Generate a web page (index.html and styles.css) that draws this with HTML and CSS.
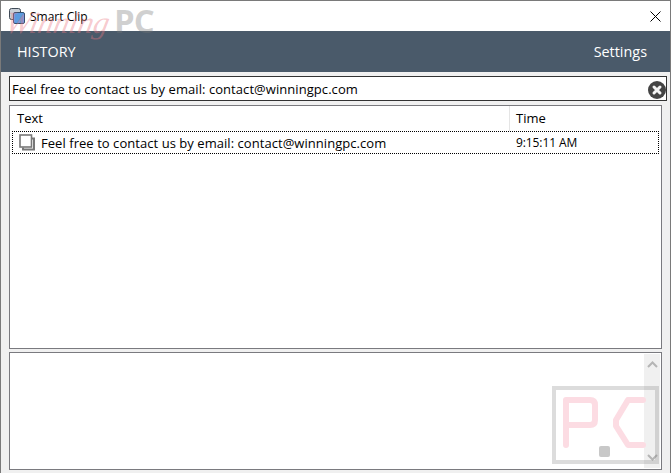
FILE: index.html
```html
<!DOCTYPE html>
<html lang="en">
<head>
    <meta charset="UTF-8">
    <title>Smart Clip</title>
    <link rel="stylesheet" href="styles.css">
</head>
<body>
    <div class="window">
        <!-- Title bar -->
        <div class="titlebar">
            <svg class="app-icon" width="16" height="16" viewBox="0 0 16 16">
                <rect x="0.5" y="0.5" width="11" height="11" rx="2" fill="#c9d0d8" stroke="#3f4a56"/>
                <rect x="4.5" y="4.5" width="11" height="11" rx="1.5" fill="#5b9be0" stroke="#33506f"/>
            </svg>
            <span class="app-title">Smart Clip</span>
            <svg class="close-icon" width="11" height="11" viewBox="0 0 11 11">
                <path d="M0.5 0.5L10.5 10.5M10.5 0.5L0.5 10.5" stroke="#000" stroke-width="1"/>
            </svg>
        </div>

        <!-- Navigation -->
        <div class="navbar">
            <span>HISTORY</span>
            <span>Settings</span>
        </div>

        <!-- Search -->
        <div class="search-box">
            <span>Feel free to contact us by email: contact@winningpc.com</span>
            <svg class="clear-icon" width="18" height="18" viewBox="0 0 18 18">
                <circle cx="9" cy="9" r="9" fill="#444"/>
                <path d="M6 6L12 12M12 6L6 12" stroke="#f4f4f4" stroke-width="3" stroke-linecap="round"/>
            </svg>
        </div>

        <!-- History list -->
        <div class="list">
            <div class="list-head">
                <div class="col-text">Text</div>
                <div class="col-time">Time</div>
            </div>
            <div class="list-row">
                <div class="col-text">
                    <svg class="copy-icon" width="16" height="17" viewBox="0 0 16 17">
                        <path d="M4 13.5V15.5H15V4.5H12.5" fill="none" stroke="#777" stroke-width="2"/>
                        <rect x="1" y="1" width="11.5" height="12" fill="#fff" stroke="#777" stroke-width="1.6"/>
                    </svg>
                    <span>Feel free to contact us by email: contact@winningpc.com</span>
                </div>
                <div class="col-time">9:15:11 AM</div>
            </div>
        </div>

        <!-- Detail pane -->
        <div class="detail">
            <div class="scrollbar">
                <svg width="11" height="7" viewBox="0 0 11 7"><path d="M1 6L5.5 1.5L10 6" fill="none" stroke="#b5b5b5" stroke-width="2"/></svg>
                <svg width="11" height="7" viewBox="0 0 11 7"><path d="M1 1L5.5 5.5L10 1" fill="none" stroke="#b5b5b5" stroke-width="2"/></svg>
            </div>
        </div>

        <!-- Watermarks -->
        <div class="mark-top">
            <span class="mark-script">Winning</span>
            <span class="mark-pc">PC</span>
        </div>
        <svg class="mark-logo" width="107" height="78" viewBox="0 0 107 78">
            <rect x="2" y="2" width="103" height="74" fill="none" stroke="#808080" stroke-opacity="0.28" stroke-width="4"/>
            <path d="M14 59V14H38Q43 14 43 19V34Q43 39 38 39H14" fill="none" stroke="#fcdce3" stroke-width="6" stroke-linecap="round" stroke-linejoin="round"/>
            <path d="M91 14H76L64 34V40L76 59H91" fill="none" stroke="#fcdce3" stroke-width="6" stroke-linecap="round" stroke-linejoin="round"/>
            <rect x="47" y="60" width="11" height="11" rx="2" fill="#c8c8c8"/>
        </svg>
    </div>
</body>
</html>
```

FILE: styles.css
```css
body {
    margin: 0;
    padding: 0;
    font-family: "Open Sans", Arial, sans-serif;
    font-size: 13px;
    color: #000;
}

.window {
    position: relative;
    box-sizing: border-box;
    width: 671px;
    height: 473px;
    border: 1px solid #7a7a7a;
    border-bottom-width: 0;
    background-color: #f0f0f0;
    overflow: hidden;
}

.titlebar {
    display: flex;
    align-items: center;
    height: 30px;
    padding: 0 9px 0 8px;
    background-color: #fff;
}

.app-title {
    margin-left: 5px;
    font-size: 12px;
}

.close-icon {
    margin-left: auto;
}

.navbar {
    display: flex;
    justify-content: space-between;
    align-items: center;
    height: 41px;
    padding: 0 23px 0 16px;
    background-color: #4a5a6a;
    color: #fff;
    font-size: 14.4px;
}

.search-box {
    display: flex;
    justify-content: space-between;
    align-items: center;
    box-sizing: border-box;
    height: 25px;
    margin: 4px 3px 4px 8px;
    padding: 0 0 0 2px;
    border: 1px solid #333;
    background-color: #fff;
    letter-spacing: 0.06px;
}

.clear-icon {
    margin-top: 3px;
}

.list {
    box-sizing: border-box;
    height: 244px;
    margin: 0 8px;
    border: 1px solid #7a7a7f;
    background-color: #fff;
}

.list-head,
.list-row {
    display: flex;
    align-items: center;
}

.list-head {
    height: 25px;
}

.list-head .col-text {
    border-right: 1px solid #e5e5e5;
}

.list-head .col-text,
.list-head .col-time {
    height: 25px;
    line-height: 25px;
}

.col-text {
    box-sizing: border-box;
    width: 500px;
    padding-left: 7px;
}

.col-time {
    padding-left: 6px;
}

.list-row {
    box-sizing: border-box;
    height: 23px;
    margin: 0 2px;
    border: 1px dotted #000;
    letter-spacing: 0.05px;
}

.list-row .col-text {
    display: flex;
    align-items: center;
    width: 498px;
    padding-left: 6px;
}

.list-row .col-time {
    padding-left: 5px;
    font-size: 12px;
    font-weight: 500;
    letter-spacing: -0.1px;
}

.copy-icon {
    margin-right: 6px;
}

.detail {
    display: flex;
    justify-content: flex-end;
    box-sizing: border-box;
    height: 118px;
    margin: 3px 8px 0;
    padding: 1px;
    border: 1px solid #7a7a7f;
    background-color: #fff;
}

.scrollbar {
    display: flex;
    flex-direction: column;
    justify-content: space-between;
    align-items: center;
    width: 16px;
    padding: 7px 0;
    box-sizing: border-box;
    background-color: #f0f0f0;
}

/* watermarks sit over the window */
.mark-top {
    position: absolute;
    top: 0;
    left: 5px;
    display: flex;
    align-items: flex-start;
    pointer-events: none;
}

.mark-script {
    width: 108px;
    margin-top: 5px;
    font-family: "Liberation Serif", serif;
    font-style: italic;
    font-size: 31px;
    line-height: 34px;
    color: rgba(235, 120, 130, 0.4);
    transform: skewX(-12deg);
}

.mark-pc {
    font-weight: 700;
    font-size: 33px;
    line-height: 40px;
    letter-spacing: -1px;
    color: rgba(120, 120, 120, 0.35);
}

.mark-logo {
    position: absolute;
    top: 385px;
    left: 551px;
    pointer-events: none;
}
```
